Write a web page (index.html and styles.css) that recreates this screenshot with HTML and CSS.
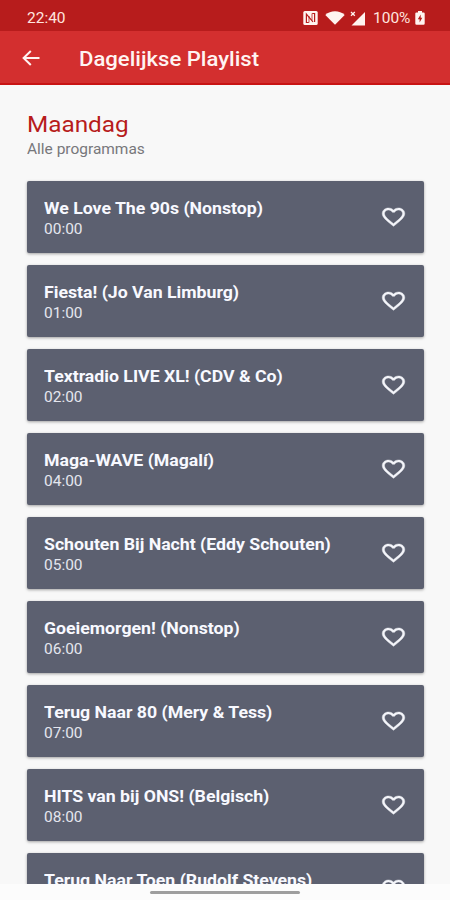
FILE: index.html
```
<!DOCTYPE html>
<html lang="nl">
<head>
    <meta charset="UTF-8">
    <meta name="viewport" content="width=device-width, initial-scale=1.0">
    <title>Dagelijkse Playlist</title>
    <link rel="stylesheet" href="styles.css">
</head>
<body>
    <div class="status-bar">
        <span class="clock wide">22:40</span>
        <div class="status-icons">
            <svg class="nfc" width="15" height="14" viewBox="0 0 15 14">
                <rect x="0.3" y="0" width="14.4" height="14" rx="1.5" fill="#fff4f0"/>
                <path d="M5.8 11.5H3.4V3.2L10 10.8M9.2 2.5H11.6V11" fill="none" stroke="#b71c1c" stroke-width="1.2"/>
                <path d="M6 5V11.5M9 2.5V9" fill="none" stroke="#b71c1c" stroke-width="0.8"/>
            </svg>
            <svg class="wifi" width="20" height="14" viewBox="0 0 20 14">
                <path d="M0.3 4C5.5-1 14.5-1 19.7 4L10 13.8z" fill="#fff4f0"/>
            </svg>
            <svg class="signal" width="16" height="15" viewBox="0 0 16 15">
                <path d="M15 1V14.5H1.5z" fill="#fff4f0"/>
                <path d="M1 1L4.8 4.8M4.8 1L1 4.8" stroke="#fff4f0" stroke-width="1.3"/>
            </svg>
            <span class="percent wide">100%</span>
            <svg class="battery" width="10" height="14" viewBox="0 0 10 14">
                <path d="M3 0h4v1.4h1.5q1.2 0 1.2 1.2v10q0 1.2-1.2 1.2h-7q-1.2 0-1.2-1.2v-10q0-1.2 1.2-1.2H3z" fill="#fff4f0"/>
                <path d="M5.7 3.6L2.8 8.2h1.8v3.2l2.7-4.6H5.7z" fill="#b71c1c"/>
            </svg>
        </div>
    </div>

    <header class="app-bar">
        <svg class="back" width="18" height="16" viewBox="0 0 18 16">
            <path d="M17.5 8H1.7M8.8 1L1.6 8L8.8 15" fill="none" stroke="#fff4f2" stroke-width="2"/>
        </svg>
        <h1 class="wide">Dagelijkse Playlist</h1>
    </header>

    <main class="content">
        <h2 class="wide">Maandag</h2>
        <p class="subtitle wide">Alle programmas</p>
        <div class="list" id="list"></div>
    </main>

    <div class="nav-bar"><div class="handle"></div></div>

    <script>
        const programs = [
            ['We Love The 90s (Nonstop)', '00:00'],
            ['Fiesta! (Jo Van Limburg)', '01:00'],
            ['Textradio LIVE XL! (CDV & Co)', '02:00'],
            ['Maga-WAVE (Magalí)', '04:00'],
            ['Schouten Bij Nacht (Eddy Schouten)', '05:00'],
            ['Goeiemorgen! (Nonstop)', '06:00'],
            ['Terug Naar 80 (Mery & Tess)', '07:00'],
            ['HITS van bij ONS! (Belgisch)', '08:00'],
            ['Terug Naar Toen (Rudolf Stevens)', '']
        ];

        const heart = `<svg class="heart" width="27" height="24" viewBox="0 0 24 24" preserveAspectRatio="none">
            <path d="M16.5 3c-1.74 0-3.41.81-4.5 2.09C10.91 3.81 9.24 3 7.5 3 4.42 3 2 5.42 2 8.5c0 3.78 3.4 6.86 8.55 11.54L12 21.35l1.45-1.32C18.6 15.36 22 12.28 22 8.5 22 5.42 19.58 3 16.5 3zm-4.4 15.55l-.1.1-.1-.1C7.14 14.24 4 11.39 4 8.5 4 6.5 5.5 5 7.5 5c1.54 0 3.04.99 3.57 2.36h1.87C13.46 5.99 14.96 5 16.5 5c2 0 3.5 1.5 3.5 3.5 0 2.89-3.14 5.74-7.9 10.05z"/>
        </svg>`;

        const list = document.getElementById('list');
        programs.forEach(([name, time]) => {
            const card = document.createElement('div');
            card.className = 'card';
            card.innerHTML = '<div class="card-text wide"><div class="name"></div><div class="time"></div></div>' + heart;
            card.querySelector('.name').textContent = name;
            card.querySelector('.time').textContent = time;
            list.appendChild(card);
        });
    </script>
</body>
</html>
```
FILE: styles.css
```
* {
    box-sizing: border-box;
}
body {
    margin: 0;
    height: 900px;
    overflow: hidden;
    display: flex;
    flex-direction: column;
    background: #f8f8f8;
    font-family: Roboto, "Liberation Sans", sans-serif;
}
h1, h2, p {
    margin: 0;
}
/* extended lettering */
.wide {
    transform: scaleX(1.105);
    transform-origin: left center;
}
.status-bar {
    flex: none;
    height: 31px;
    padding: 5px 25px 0 27px;
    display: flex;
    justify-content: space-between;
    align-items: center;
    background: #b71c1c;
    color: #ffe4df;
    font-size: 14px;
}
.status-icons {
    display: flex;
    align-items: center;
}
.wifi {
    margin-left: 7px;
}
.signal {
    margin-left: 5px;
}
.percent {
    margin-left: 7px;
}
.battery {
    margin-left: 8px;
}
.app-bar {
    flex: none;
    height: 54px;
    padding: 2px 22px 0;
    display: flex;
    align-items: center;
    background: #d32f2f;
    border-bottom: 2px solid #c81414;
    color: #fff4f2;
}
.app-bar h1 {
    margin-left: 39px;
    padding-top: 1px;
    font-size: 20px;
    font-weight: 500;
    line-height: 24px;
}
.content {
    flex: 1;
    min-height: 0;
    overflow: hidden;
    padding: 26px 26px 0 27px;
}
.content h2 {
    width: 200px;
    color: #b71c1c;
    font-size: 22px;
    font-weight: 400;
    line-height: 28px;
}
.subtitle {
    width: 200px;
    color: #77777b;
    font-size: 14px;
    line-height: 20px;
}
.list {
    margin-top: 22px;
    display: flex;
    flex-direction: column;
    gap: 12px;
}
.card {
    flex: none;
    height: 72px;
    padding: 0 17px;
    display: flex;
    justify-content: space-between;
    align-items: center;
    background: #5c6070;
    border-radius: 2px;
    box-shadow: 0 1px 3px rgba(0,0,0,0.35);
}
.card-text {
    height: 40px;
    margin-top: 3px;
}
.name {
    color: #f8f9ff;
    font-size: 16px;
    font-weight: 700;
    line-height: 20px;
}
.time {
    color: #e4e6ee;
    font-size: 14px;
    line-height: 20px;
}
.heart {
    fill: #f4f5fa;
    stroke: #f4f5fa;
    stroke-width: 0.4;
}
.nav-bar {
    flex: none;
    height: 16px;
    padding-top: 7px;
    background: #fcfcfc;
}
.handle {
    width: 150px;
    height: 3px;
    margin: 0 auto;
    border-radius: 2px;
    background: #9e9e9e;
}
```
